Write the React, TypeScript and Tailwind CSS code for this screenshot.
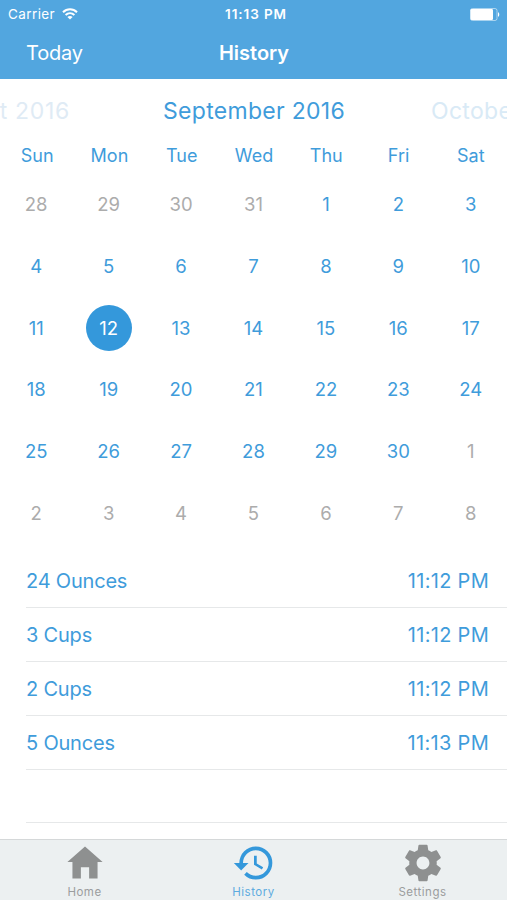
import type { ReactNode } from "react";

interface Entry {
  id: number;
  amount: string;
  time: string;
}

const weekdays = ["Sun", "Mon", "Tue", "Wed", "Thu", "Fri", "Sat"];

// August 28 is the first visible day, the grid always shows six weeks
const days = Array.from({ length: 42 }, (_, i) => {
  if (i < 4) return { day: 28 + i, current: false };
  if (i < 34) return { day: i - 3, current: true };
  return { day: i - 33, current: false };
});

const entries: Entry[] = [
  { id: 1, amount: "24 Ounces", time: "11:12 PM" },
  { id: 2, amount: "3 Cups", time: "11:12 PM" },
  { id: 3, amount: "2 Cups", time: "11:12 PM" },
  { id: 4, amount: "5 Ounces", time: "11:13 PM" },
];

function StatusBar() {
  return (
    <div className="grid h-7 grid-cols-3 items-center pl-2 pr-[7px] text-[13px]">
      <div className="flex items-center gap-[7px]">
        <span className="text-[13.5px] tracking-[0.4px]">Carrier</span>
        <svg className="h-[12px] w-[16px]" viewBox="0 0 16 12" fill="none" stroke="currentColor" strokeWidth={2}>
          <path d="M1 4.2C5 .2 11 .2 15 4.2" />
          <path d="M3.6 7C6.2 4.5 9.8 4.5 12.4 7" />
          <path d="M8 11.6 5.4 9C6.8 7.6 9.2 7.6 10.6 9z" fill="currentColor" stroke="none" />
        </svg>
      </div>
      <span className="pl-[4px] text-center text-[13.5px] font-semibold tracking-[0.9px]">11:13 PM</span>
      <svg className="h-[13px] w-[30px] justify-self-end" viewBox="0 0 30 13">
        <rect x="0.5" y="0.5" width="26.5" height="12" rx="2" fill="none" stroke="currentColor" strokeOpacity="0.5" />
        <rect x="0.5" y="1" width="22.5" height="11" rx="1.2" fill="currentColor" />
        <path d="M28 4.2c1.7.6 1.7 4 0 4.6z" fill="currentColor" />
      </svg>
    </div>
  );
}

function Tab({ label, active, children }: { label: string; active?: boolean; children: ReactNode }) {
  return (
    <button className={`flex flex-col items-center pt-px ${active ? "text-[#3498db]" : "text-[#8e9090]"}`}>
      <svg className="size-11" viewBox="0 0 24 24" fill="currentColor">
        {children}
      </svg>
      <span
        className={`text-[11.5px] leading-[14px] tracking-[0.5px] ${active ? "text-[#5dabe0]" : "text-[#9b9d9e]"}`}
      >
        {label}
      </span>
    </button>
  );
}

export default function App() {
  return (
    <main className="flex h-[900px] w-[507px] flex-col overflow-hidden bg-white font-['Inter',sans-serif] text-[#3f9cdb]">
      {/* Navigation bar */}
      <header className="h-[79px] shrink-0 bg-[#52a6df] text-white">
        <StatusBar />
        <nav className="grid h-[49px] grid-cols-3 items-center px-[26px] text-[20px]">
          <button className="text-left tracking-[-0.2px]">Today</button>
          <h1 className="pl-px text-center font-semibold">History</h1>
        </nav>
      </header>

      {/* Month switcher */}
      <div className="flex h-[63px] shrink-0 items-center justify-center whitespace-nowrap pt-px text-[23px] tracking-[0.3px]">
        <span className="flex w-[163px] shrink-0 justify-end pr-[93px] tracking-[0.7px] text-[#dfebf5]">
          August 2016
        </span>
        <h2 className="w-[181px] shrink-0 text-center">September 2016</h2>
        <span className="w-[163px] shrink-0 pl-[87px] text-[#d9eaf6]">October 2016</span>
      </div>

      {/* Calendar */}
      <div className="grid h-8 shrink-0 grid-cols-7 pl-px text-center text-[18px] leading-[27px]">
        {weekdays.map((name) => (
          <span key={name}>{name}</span>
        ))}
      </div>
      <div className="grid h-[370px] shrink-0 grid-cols-7 grid-rows-6 place-items-center text-[18.5px]">
        {days.map(({ day, current }, i) => {
          const selected = current && day === 12;
          return (
            <span
              key={i}
              className={`flex size-[46px] items-center justify-center rounded-full pt-px ${
                selected ? "bg-[#3498db] text-white" : current ? "" : "text-[#acacac]"
              }`}
            >
              {day}
            </span>
          );
        })}
      </div>

      {/* Logged drinks */}
      <ul className="flex-1 pl-[26px] pt-[10px] text-[20px]">
        {entries.map((entry) => (
          <li
            key={entry.id}
            className="flex h-[53.9px] items-center justify-between border-b border-[#e6e8e9] pr-[18px] pt-[2px]"
          >
            <span className="tracking-[-0.2px]">{entry.amount}</span>
            <span className="tracking-[0.3px]">{entry.time}</span>
          </li>
        ))}
        <li className="h-[53.9px] border-b border-[#e6e8e9]" />
      </ul>

      {/* Tab bar */}
      <footer className="grid h-[61px] shrink-0 grid-cols-3 border-t border-[#d5d8d9] bg-[#ecf0f1]">
        <Tab label="Home">
          <path d="M9.75 20.5v-6.2h4.5v6.2h4.6v-9H21.6L12 3l-9.6 8.5h2.75v9z" />
        </Tab>
        <Tab label="History" active>
          <path d="M13 3a9 9 0 0 0-9 9H1l3.89 3.89.07.14L9 12H6c0-3.87 3.13-7 7-7s7 3.13 7 7-3.13 7-7 7c-1.93 0-3.68-.79-4.94-2.06l-1.42 1.42A8.954 8.954 0 0 0 13 21a9 9 0 0 0 0-18zm-1 5v5l4.28 2.54.72-1.21-3.5-2.08V8H12z" />
        </Tab>
        <Tab label="Settings">
          <path d="M19.43 12.98c.04-.32.07-.64.07-.98s-.03-.66-.07-.98l2.11-1.65c.19-.15.24-.42.12-.64l-2-3.46c-.12-.22-.39-.3-.61-.22l-2.49 1c-.52-.4-1.08-.73-1.69-.98l-.38-2.65A.488.488 0 0 0 14 2h-4c-.25 0-.46.18-.49.42l-.38 2.65c-.61.25-1.17.59-1.69.98l-2.49-1c-.23-.09-.49 0-.61.22l-2 3.46c-.13.22-.07.49.12.64l2.11 1.65c-.04.32-.07.65-.07.98s.03.66.07.98l-2.11 1.65c-.19.15-.24.42-.12.64l2 3.46c.12.22.39.3.61.22l2.49-1c.52.4 1.08.73 1.69.98l.38 2.65c.03.24.24.42.49.42h4c.25 0 .46-.18.49-.42l.38-2.65c.61-.25 1.17-.59 1.69-.98l2.49 1c.23.09.49 0 .61-.22l2-3.46c.12-.22.07-.49-.12-.64l-2.11-1.65zM12 15.5c-1.93 0-3.5-1.57-3.5-3.5s1.57-3.5 3.5-3.5 3.5 1.57 3.5 3.5-1.57 3.5-3.5 3.5z" />
        </Tab>
      </footer>
    </main>
  );
}
